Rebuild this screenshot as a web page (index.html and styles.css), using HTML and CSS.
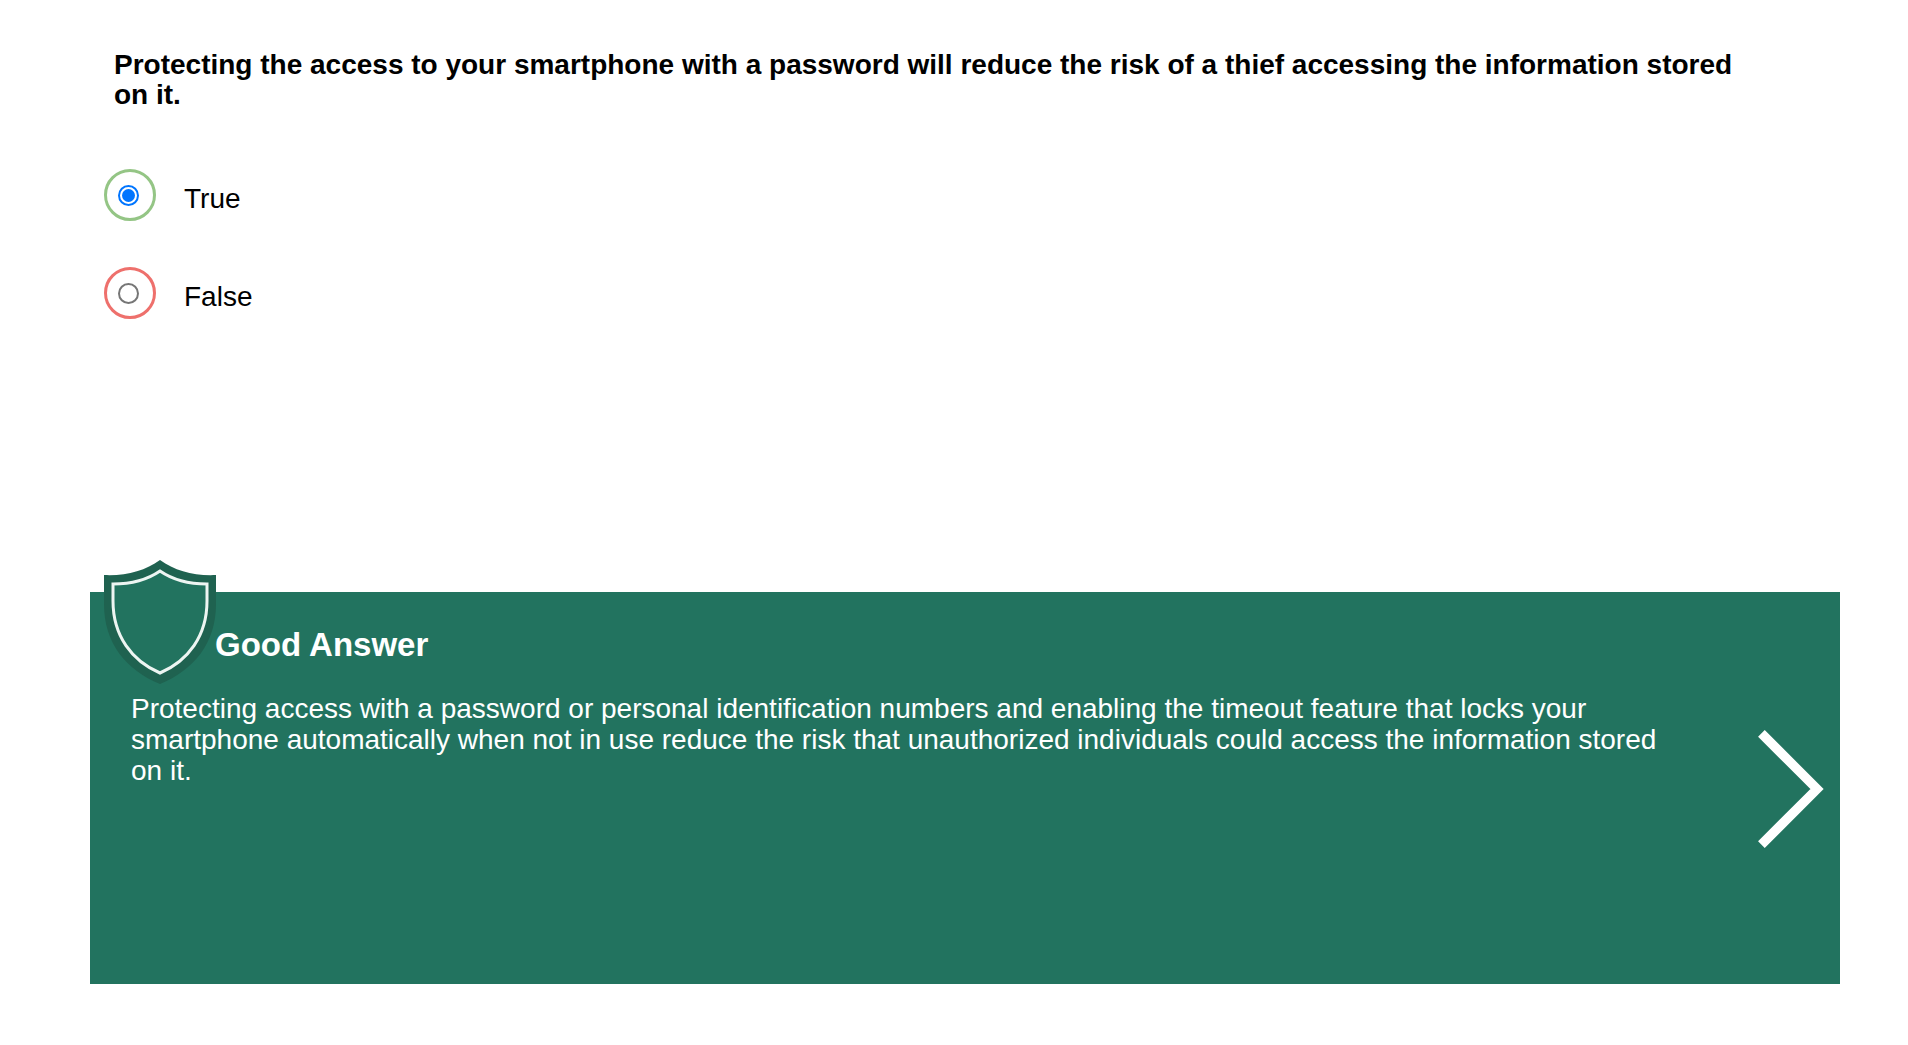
FILE: index.html
```html
<!DOCTYPE html>
<html lang="en">
<head>
<meta charset="utf-8">
<meta name="viewport" content="width=device-width, initial-scale=1">
<title>Smartphone security quiz</title>
<link rel="stylesheet" href="styles.css">
</head>
<body>
<main class="quiz">
  <fieldset class="question">
    <legend class="question-text">Protecting the access to your smartphone with a password will reduce the risk of a thief accessing the information stored on it.</legend>
    <div class="options">
      <label class="option">
        <span class="ring ring-correct"><input class="radio" type="radio" name="answer" value="true" checked></span>
        <span class="option-text">True</span>
      </label>
      <label class="option">
        <span class="ring ring-wrong"><input class="radio" type="radio" name="answer" value="false"></span>
        <span class="option-text">False</span>
      </label>
    </div>
  </fieldset>
  <section class="feedback">
    <svg class="shield" viewBox="0 0 112 124" aria-hidden="true">
      <path fill="#1f6250" d="M56 0C71 11 90 16 112 15V44C112 83 90 110 56 124C22 110 0 83 0 44V15C22 16 41 11 56 0Z"/>
      <path fill="#22735f" stroke="#edf5f2" stroke-width="3" d="M56 11C69 20 84 24 103 24V41C103 76 84 101 56 113C28 101 9 76 9 41V24C28 24 43 20 56 11Z"/>
    </svg>
    <div class="feedback-body">
      <h2 class="feedback-title">Good Answer</h2>
      <p class="feedback-text">Protecting access with a password or personal identification numbers and enabling the timeout feature that locks your smartphone automatically when not in use reduce the risk that unauthorized individuals could access the information stored on it.</p>
    </div>
    <button class="next" type="button" aria-label="Next question">
      <svg class="next-icon" viewBox="0 0 66 118" aria-hidden="true">
        <path fill="none" stroke="#fff" stroke-width="9.4" d="M3.4 3.4L59 59L3.4 114.6"/>
      </svg>
    </button>
  </section>
</main>
</body>
</html>
```
FILE: styles.css
```css
* { box-sizing: border-box; }

body {
  margin: 0;
  background: #fff;
  color: #000;
  font-family: "Liberation Sans", Arial, sans-serif;
  font-size: 28px;
  line-height: 31px;
}

.quiz {
  display: flex;
  flex-direction: column;
  gap: 273px;
  padding: 50px 68px 60px 90px;
}

.question {
  min-width: 0;
  margin: 0;
  padding: 0 88px 0 14px;
  border: 0;
}

.question-text {
  padding: 0 0 0 10px;
  font-weight: 700;
  line-height: 30px;
}

.options {
  display: flex;
  flex-direction: column;
  gap: 46px;
  padding-top: 59px;
}

.option {
  display: flex;
  align-items: center;
  gap: 28px;
}

.ring {
  display: flex;
  align-items: center;
  width: 52px;
  height: 52px;
  padding-left: 11px;
  border: 3px solid;
  border-radius: 50%;
}

.ring-correct { border-color: #94c585; }
.ring-wrong { border-color: #ee706c; }

.radio {
  display: grid;
  place-items: center;
  width: 21px;
  height: 21px;
  margin: 0;
  border: 2px solid #767676;
  border-radius: 50%;
  background: #fff;
  appearance: none;
}

.radio:checked { border-color: #0075ff; }

.radio:checked::before {
  content: "";
  width: 13px;
  height: 13px;
  border-radius: 50%;
  background: #0075ff;
}

.option-text { padding-top: 6px; }

.feedback {
  position: relative;
  display: flex;
  align-items: center;
  min-height: 392px;
  padding-right: 16px;
  background: #22735f;
  color: #fff;
}

.shield {
  position: absolute;
  top: -32px;
  left: 14px;
  width: 112px;
}

.feedback-body {
  flex: 1;
  align-self: flex-start;
  padding: 33px 80px 32px 41px;
}

.feedback-title {
  margin: 0 0 28px;
  padding-left: 84px;
  font-size: 33px;
  line-height: 40px;
}

.feedback-text { margin: 0; }

.next {
  padding: 2px 0 0;
  border: 0;
  background: none;
  cursor: pointer;
}

.next-icon {
  display: block;
  width: 66px;
}
```
